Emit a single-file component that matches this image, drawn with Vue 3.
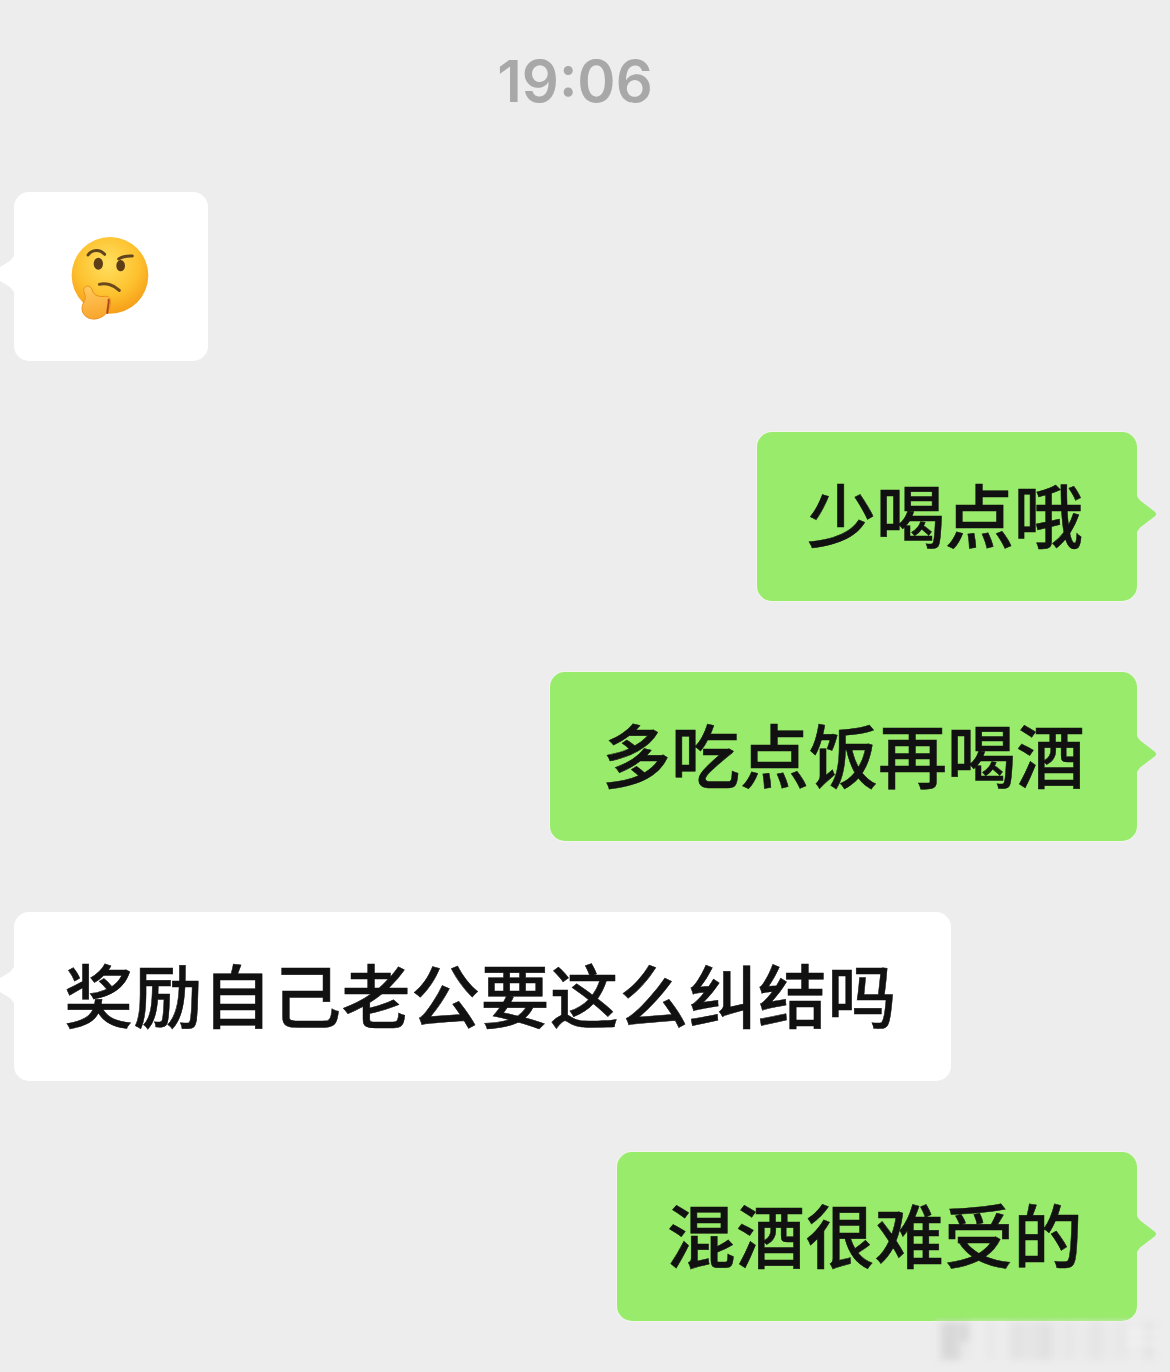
<template>
  <div class="chat">
    <div class="time">19:06</div>
    <div class="messages">
      <div v-for="msg in messages" :key="msg.id" class="row" :class="msg.side">
        <div class="bubble" :class="msg.side">
          <svg v-if="msg.side === 'left'" class="tail tail-left" :style="{ top: msg.tailTop + 'px' }" width="16" height="44" viewBox="0 0 16 44">
            <path d="M16 0 L16 44 C14 40 12 37 10 35 L0 29 L0 15 L10 9 C12 7 14 4 16 0 Z" fill="#fff" />
          </svg>
          <svg v-else class="tail tail-right" width="21" height="44" viewBox="0 0 21 44">
            <path d="M0 0 C1 5 3 8 6 10 L18.500 19.500 C20.500 21 20.500 23 18.500 24.500 L6 34 C3 36 1 39 0 44 Z" fill="#98eb6b" />
          </svg>

          <svg v-if="msg.emoji" class="emoji" width="100" height="90" viewBox="0 0 300 270">
            <defs>
              <radialGradient id="face" cx="47%" cy="35%" r="68%">
                <stop offset="0%" stop-color="#ffe060" />
                <stop offset="60%" stop-color="#fdc12e" />
                <stop offset="100%" stop-color="#f59a16" />
              </radialGradient>
              <linearGradient id="hand" x1="0.3" y1="0" x2="0.5" y2="1">
                <stop offset="0%" stop-color="#ffc95c" />
                <stop offset="100%" stop-color="#f9a52c" />
              </linearGradient>
            </defs>
            <circle cx="150" cy="133" r="115" fill="url(#face)" />
            <path d="M84 72 C96 54 120 54 134 70" fill="none" stroke="#5f4420" stroke-width="9" stroke-linecap="round" />
            <path d="M176 84 C188 76 202 74 217 75" fill="none" stroke="#5f4420" stroke-width="9" stroke-linecap="round" />
            <ellipse cx="115" cy="98" rx="14" ry="18" fill="#5b3d17" />
            <ellipse cx="182" cy="104" rx="13" ry="17" fill="#5b3d17" />
            <path d="M118 160 C136 155 160 160 178 178" fill="none" stroke="#6a4a1c" stroke-width="9" stroke-linecap="round" />
            <path d="M72 172 C80 160 94 165 98 180 C102 194 116 198 136 196 C152 195 154 210 150 226 C145 246 130 260 106 264 C84 266 66 252 66 232 C66 220 74 212 76 200 C77 190 68 182 72 172 Z" fill="url(#hand)" stroke="#eb8f1c" stroke-width="3" />
            <path d="M146 206 C148 218 142 230 142 246" fill="none" stroke="#a8481c" stroke-width="6" stroke-linecap="round" />
          </svg>
          <span v-else class="text" :class="{ loose: msg.loose, nudge: msg.nudge }">{{ msg.text }}</span>
        </div>
      </div>
    </div>
    <div class="watermark"></div>
  </div>
</template>

<script setup>
const messages = [
  { id: 1, side: 'left', emoji: true, tailTop: 60 },
  { id: 2, side: 'right', text: '少喝点哦' },
  { id: 3, side: 'right', text: '多吃点饭再喝酒', nudge: true },
  { id: 4, side: 'left', text: '奖励自己老公要这么纠结吗', tailTop: 51, loose: true },
  { id: 5, side: 'right', text: '混酒很难受的', loose: true },
];
</script>

<style>
html, body {
  margin: 0;
  background: #ededed;
}
</style>

<style scoped>
.chat {
  width: 1170px;
  height: 1372px;
  background: #ededed;
  overflow: hidden;
  font-family: "Noto Sans CJK SC", "Liberation Sans", sans-serif;
}

.time {
  box-sizing: border-box;
  height: 192px;
  padding: 46px 20px 0 0;
  line-height: 70px;
  text-align: center;
  font-family: Inter, "Liberation Sans", sans-serif;
  font-size: 58px;
  font-weight: 600;
  color: #a8a8a8;
  filter: blur(0.6px);
}

.messages {
  display: flex;
  flex-direction: column;
  gap: 71px;
  padding: 0 33px 0 14px;
}

.row {
  display: flex;
}

.row.right {
  justify-content: flex-end;
}

.bubble {
  position: relative;
  height: 169px;
  min-width: 194px;
  padding: 0 54px 6px 50px;
  box-sizing: border-box;
  border-radius: 15px;
  display: flex;
  align-items: center;
  justify-content: center;
}

.bubble.left {
  background: #fff;
}

.bubble.right {
  background: #98eb6b;
  box-shadow: 0 0 0 1px #f1f5ec;
}

.tail {
  position: absolute;
}

.tail-left {
  left: -14px;
}

.tail-right {
  top: 60px;
  right: -20px;
}

.text {
  font-size: 69px;
  font-weight: 500;
  line-height: 1;
  white-space: nowrap;
  color: #111;
  -webkit-text-stroke: 0.5px #111;
}

.text.loose {
  letter-spacing: 0.4px;
}

.text.nudge {
  position: relative;
  left: 2px;
}

.emoji {
  flex: none;
  margin: 5px -51px 0 -49px;
  filter: blur(0.4px);
}

.watermark {
  width: 222px;
  height: 38px;
  margin: 1px 0 0 936px;
  background:
    linear-gradient(#d9d9d9, #d9d9d9) 24px 0 / 9px 20px no-repeat,
    linear-gradient(#f8f8f8, #f8f8f8) 190px 10px / 32px 2px no-repeat,
    linear-gradient(#f8f8f8, #f8f8f8) 190px 20px / 32px 2px no-repeat,
    linear-gradient(90deg, #ededed 0, #d8d8d8 4% 9%, #e8e8e8 12%, #eeeeee 20%, #e8e8e8 25%, #eeeeee 30%, #e2e2e2 36%, #e6e6e6 42%, #e0e0e0 50%, #ebebeb 55%, #e6e6e6 60%, #ececec 65%, #e4e4e4 72%, #ebebeb 78%, #e7e7e7 84%, #eeeeee 90%, #e4e4e4 96%, #ededed 100%);
  filter: blur(3px);
}
</style>
